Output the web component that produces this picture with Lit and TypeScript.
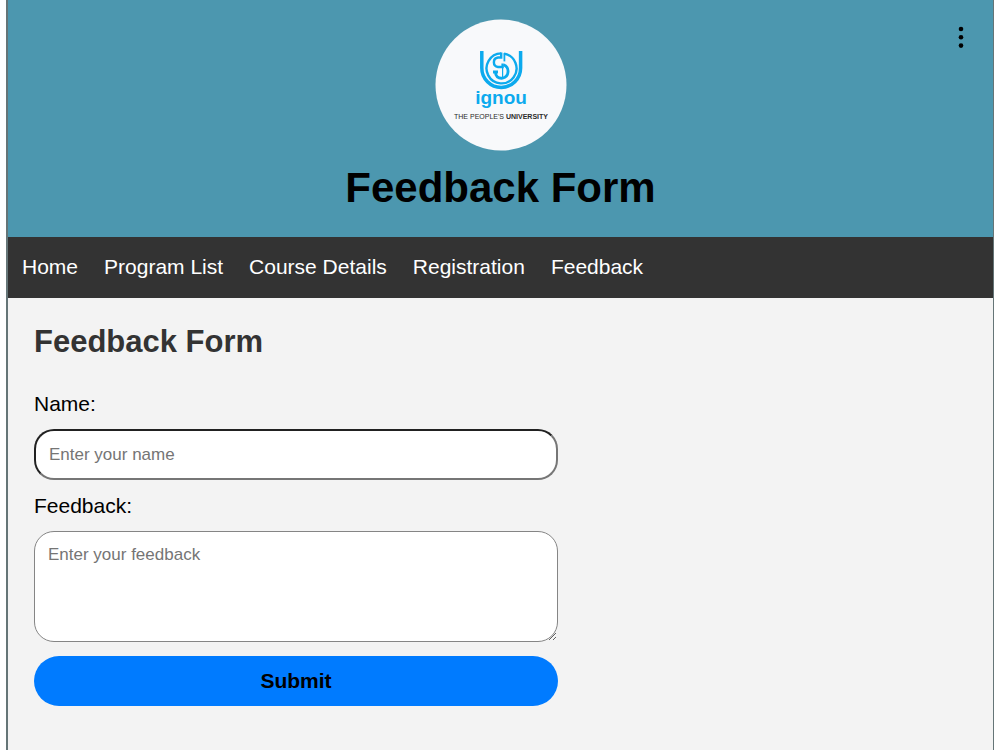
import { LitElement, html, css } from "lit";
import { customElement } from "lit/decorators.js";

const NAV_ITEMS = ["Home", "Program List", "Course Details", "Registration", "Feedback"];

@customElement("ignou-logo")
class IgnouLogo extends LitElement {
  static styles = css`
    :host {
      display: block;
    }
    svg {
      display: block;
      width: 132px;
      height: 132px;
    }
    .mark {
      fill: none;
      stroke: #0caaee;
    }
    .name {
      fill: #0caaee;
      font: bold 19px "Liberation Sans", Arial, sans-serif;
      text-anchor: middle;
    }
    .motto {
      fill: #2b2b2b;
      font: 7px "Liberation Sans", Arial, sans-serif;
      text-anchor: middle;
    }
    .strong {
      font-weight: bold;
    }
  `;

  render() {
    return html`
      <svg viewBox="0 0 132 132" role="img" aria-label="IGNOU, The People's University">
        <circle cx="66" cy="66" r="65.5" fill="#f8f9fb"></circle>
        <g class="mark">
          <path d="M46.8 32V49A19.4 19.4 0 0 0 85.6 49V32" stroke-width="3.5"></path>
          <path d="M66.2 34.4A15 15 0 1 0 69 34.6" stroke-width="2.4"></path>
          <path d="M66.2 33.5V38.5H63A4.8 4.8 0 0 0 63 48H67.6V44.6" stroke-width="2.4"></path>
          <path d="M69.4 34V42.4" stroke-width="1.8"></path>
          <path d="M68.5 45.8A7 7 0 0 1 67.5 59.2C63 59.6 60.4 57.5 60.4 52.8M58 53H63" stroke-width="2.8"></path>
          <path d="M67.6 48V58" stroke-width="1.2"></path>
        </g>
        <text class="name" x="66" y="85">ignou</text>
        <text class="motto" x="66" y="100">THE PEOPLE'S <tspan class="strong">UNIVERSITY</tspan></text>
      </svg>
    `;
  }
}

@customElement("app-root")
class AppRoot extends LitElement {
  static styles = css`
    :host {
      display: block;
      box-sizing: border-box;
      min-height: 100vh;
      padding: 0 6px;
      background: #fff;
      font: 21px/24px "Liberation Sans", Arial, sans-serif;
      color: #000;
    }
    * {
      box-sizing: border-box;
    }
    .frame {
      display: flex;
      flex-direction: column;
      min-height: 100vh;
      border: solid #657577;
      border-width: 0 1px 0 2px;
      background: #f3f3f3;
    }
    .header {
      position: relative;
      display: flex;
      flex-direction: column;
      align-items: center;
      gap: 13px;
      padding: 19px 26px 25px;
      background: #4c97af;
    }
    .title {
      margin: 0;
      font-size: 42px;
      line-height: 48px;
    }
    .menu {
      position: absolute;
      top: 20px;
      right: 20px;
      padding: 4px 8px;
      border: 0;
      background: none;
    }
    .menu svg {
      display: block;
      width: 8px;
      height: 26px;
    }
    .nav {
      display: flex;
      flex-wrap: wrap;
      gap: 26px;
      padding: 18px 14px 19px;
      background: #333;
    }
    .link {
      color: #fff;
      text-decoration: none;
    }
    .content {
      padding: 26px;
    }
    .heading {
      margin: 0 0 32px;
      color: #333;
      font-size: 31px;
      line-height: 36px;
    }
    .form {
      display: flex;
      flex-direction: column;
      max-width: 524px;
    }
    .label {
      margin-bottom: 13px;
    }
    .field {
      display: block;
      width: 100%;
      margin: 0 0 14px;
      padding: 13px;
      border-radius: 20px;
      background: #fff;
      font: 17px/20px "Liberation Sans", Arial, sans-serif;
      color: #000;
    }
    .field::placeholder {
      color: #757575;
    }
    .line {
      height: 51px;
      border: 2px inset #767676;
    }
    .area {
      height: 111px;
      border: 1px solid #858585;
      resize: vertical;
    }
    .submit {
      height: 50px;
      border: 0;
      border-radius: 26px;
      background: #007bff;
      color: #000;
      font: bold 21px/24px "Liberation Sans", Arial, sans-serif;
    }
  `;

  render() {
    return html`
      <div class="frame">
        <header class="header">
          <ignou-logo></ignou-logo>
          <h1 class="title">Feedback Form</h1>
          <button class="menu" type="button" aria-label="Menu">
            <svg viewBox="0 0 8 26" aria-hidden="true">
              <circle cx="4" cy="5" r="2.3"></circle>
              <circle cx="4" cy="13.3" r="2.3"></circle>
              <circle cx="4" cy="21.6" r="2.3"></circle>
            </svg>
          </button>
        </header>
        <nav class="nav">
          ${NAV_ITEMS.map((item) => html`<a class="link" href="#">${item}</a>`)}
        </nav>
        <main class="content">
          <h2 class="heading">Feedback Form</h2>
          <form class="form">
            <label class="label" for="name">Name:</label>
            <input class="field line" id="name" type="text" placeholder="Enter your name" />
            <label class="label" for="feedback">Feedback:</label>
            <textarea class="field area" id="feedback" placeholder="Enter your feedback"></textarea>
            <button class="submit" type="submit">Submit</button>
          </form>
        </main>
      </div>
    `;
  }
}
